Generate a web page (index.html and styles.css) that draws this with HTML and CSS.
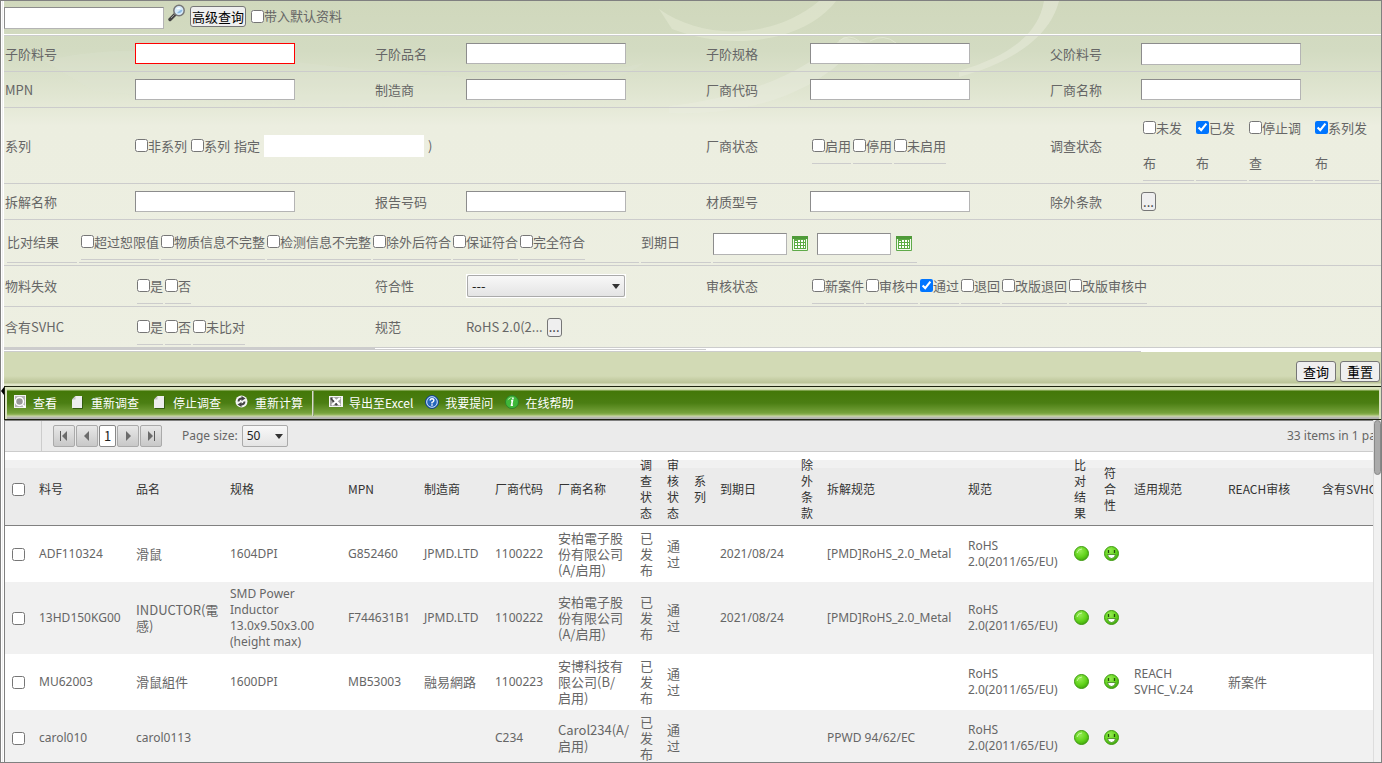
FILE: index.html
```html
<!DOCTYPE html>
<html lang="zh-CN">
<head>
<meta charset="utf-8">
<title>查询</title>
<link rel="stylesheet" href="styles.css">
</head>
<body>
<div class="page">
<div class="rail"><span class="rail-handle"></span></div>
<main class="content">
<form class="search">
  <svg class="art" viewBox="0 0 1377 130" preserveAspectRatio="none" aria-hidden="true">
    <path d="M40 60C200 20 420 110 640 62C560 120 300 110 90 90Z" fill="#e3e8d6" opacity=".2"/>
    <path d="M655 8C700 40 770 38 815 0L832 0C800 42 725 50 668 28Z" fill="#e3e7d2" opacity=".6"/>
    <path d="M665 105C750 95 800 70 840 36C870 45 900 48 925 46C890 66 860 66 838 60C800 95 740 115 665 112Z" fill="#eceee0" opacity=".4"/>
    <path d="M955 70C1010 54 1035 30 1040 0L1055 0C1045 40 1000 64 955 76Z" fill="#e6ead8" opacity=".6"/>
    <path d="M835 40Q845 32 855 40M866 40Q880 32 892 42" fill="none" stroke="#e6ead8" opacity=".7"/>
  </svg>
  <div class="quick">
    <input class="box tall" type="text" aria-label="快速查询">
    <button class="find" type="button" aria-label="搜索"><svg width="18" height="18" viewBox="0 0 18 18"><path d="M2 15.500L7.500 10" stroke="#444" stroke-width="3.400" stroke-linecap="round"/><path d="M3 14L6.500 10.500" stroke="#999" stroke-width="1"/><circle cx="11" cy="6.500" r="5.200" fill="#d5eafa" stroke="#777" stroke-width="1.500"/><path d="M8 5Q10 2.500 13 4Q11 6 8 5" fill="#fff"/><path d="M9 9Q13 10 14.500 6Q13 5 9 9" fill="#8dbbe4"/></svg></button>
    <button class="btn" type="button">高级查询</button>
    <label class="tick"><input type="checkbox">带入默认资料</label>
  </div>

  <div class="row">
    <label for="f1">子阶料号</label><div><input id="f1" class="box error" type="text"></div>
    <label for="f2">子阶品名</label><div><input id="f2" class="box" type="text"></div>
    <label for="f3">子阶规格</label><div><input id="f3" class="box" type="text"></div>
    <label for="f4">父阶料号</label><div><input id="f4" class="box tall" type="text"></div>
  </div>
  <div class="row">
    <label for="f5">MPN</label><div><input id="f5" class="box" type="text"></div>
    <label for="f6">制造商</label><div><input id="f6" class="box" type="text"></div>
    <label for="f7">厂商代码</label><div><input id="f7" class="box" type="text"></div>
    <label for="f8">厂商名称</label><div><input id="f8" class="box" type="text"></div>
  </div>
  <div class="row">
    <span>系列</span>
    <div class="series span3"><label class="tick"><input type="checkbox">非系列</label><label class="tick"><input type="checkbox">系列</label><label for="f9">指定</label><input id="f9" class="box tall plain" type="text"><span>)</span></div>
    <span>厂商状态</span>
    <div class="checks"><label class="opt"><input type="checkbox">启用</label><label class="opt"><input type="checkbox">停用</label><label class="opt"><input type="checkbox">未启用</label></div>
    <span>调查状态</span>
    <div class="checks survey"><label class="opt"><input type="checkbox">未发布</label><label class="opt"><input type="checkbox" checked>已发布</label><label class="opt"><input type="checkbox">停止调查</label><label class="opt"><input type="checkbox" checked>系列发布</label></div>
  </div>
  <div class="row">
    <label for="f10">拆解名称</label><div><input id="f10" class="box" type="text"></div>
    <label for="f11">报告号码</label><div><input id="f11" class="box" type="text"></div>
    <label for="f12">材质型号</label><div><input id="f12" class="box" type="text"></div>
    <span>除外条款</span><div><button class="dots" type="button" aria-label="选择除外条款">...</button></div>
  </div>
  <div class="row compare">
    <span class="cell">比对结果</span>
    <div class="cell checks"><label class="opt"><input type="checkbox">超过恕限值</label><label class="opt"><input type="checkbox">物质信息不完整</label><label class="opt"><input type="checkbox">检测信息不完整</label><label class="opt"><input type="checkbox">除外后符合</label><label class="opt"><input type="checkbox">保证符合</label><label class="opt"><input type="checkbox">完全符合</label></div>
    <span class="cell">到期日</span>
    <div class="cell dates">
      <input class="box tall date" type="text" aria-label="到期日起">
      <button class="cal" type="button" aria-label="选择开始日期"><svg width="16" height="16" viewBox="0 0 16 16"><path d="M.5.500H15.500V14.500H.5Z" fill="#f2faee" stroke="#5faa4a"/><path d="M0 0H16V3H0Z" fill="#4f9a39"/><path d="M2 3H14V13H2Z" fill="#5bab43"/><path d="M3 5h2v1H3zM6 4h2v2H6zM9 4h2v2H9zM12 4h1v2h-1zM3 7h2v2H3zM6 7h2v2H6zM9 7h2v2H9zM12 7h1v2h-1zM3 10h2v2H3zM6 10h2v2H6zM9 10h2v2H9zM12 10h1v2h-1z" fill="#fff"/></svg></button>
      <input class="box tall date" type="text" aria-label="到期日止">
      <button class="cal" type="button" aria-label="选择结束日期"><svg width="16" height="16" viewBox="0 0 16 16"><path d="M.5.500H15.500V14.500H.5Z" fill="#f2faee" stroke="#5faa4a"/><path d="M0 0H16V3H0Z" fill="#4f9a39"/><path d="M2 3H14V13H2Z" fill="#5bab43"/><path d="M3 5h2v1H3zM6 4h2v2H6zM9 4h2v2H9zM12 4h1v2h-1zM3 7h2v2H3zM6 7h2v2H6zM9 7h2v2H9zM12 7h1v2h-1zM3 10h2v2H3zM6 10h2v2H6zM9 10h2v2H9zM12 10h1v2h-1z" fill="#fff"/></svg></button>
    </div>
  </div>
  <div class="row">
    <span>物料失效</span><div class="checks"><label class="opt"><input type="checkbox">是</label><label class="opt"><input type="checkbox">否</label></div>
    <label for="f13">符合性</label><div><span class="pick wide"><select id="f13"><option>---</option></select></span></div>
    <span>审核状态</span>
    <div class="checks span3"><label class="opt"><input type="checkbox">新案件</label><label class="opt"><input type="checkbox">审核中</label><label class="opt"><input type="checkbox" checked>通过</label><label class="opt"><input type="checkbox">退回</label><label class="opt"><input type="checkbox">改版退回</label><label class="opt"><input type="checkbox">改版审核中</label></div>
  </div>
  <div class="row">
    <span>含有SVHC</span><div class="checks"><label class="opt"><input type="checkbox">是</label><label class="opt"><input type="checkbox">否</label><label class="opt"><input type="checkbox">未比对</label></div>
    <span>规范</span><div class="spec">RoHS 2.0(2...<button class="dots" type="button" aria-label="选择规范">...</button></div>
  </div>
  <div class="edge"><i class="edge-a"></i><i class="edge-b"></i><i class="edge-c"></i><i></i></div>
  <div class="actions"><button class="btn" type="button">查询</button><button class="btn" type="reset">重置</button></div>
</form>

<nav class="toolbar">
  <button type="button"><svg width="14" height="14" viewBox="0 0 14 14"><path d="M1 0H13V13H1Z" fill="#f2f2f2"/><path d="M2 1H12V12H2Z" fill="#b5b5b5"/><circle cx="6.500" cy="6.500" r="4" fill="#999" stroke="#fff" stroke-width="1.500"/><path d="M10 10L12 12.500" stroke="#fff" stroke-width="2"/></svg>查看</button>
  <button type="button"><svg width="14" height="14" viewBox="0 0 14 14"><path d="M4.500 1H11V13H1V4.500Z" fill="#eee"/><path d="M4.500 1V4.500H1Z" fill="#c5c5c5"/><path d="M11.500 2V13.500H2" fill="none" stroke="#355d12"/></svg>重新调查</button>
  <button type="button"><svg width="14" height="14" viewBox="0 0 14 14"><path d="M4.500 1H11V13H1V4.500Z" fill="#eee"/><path d="M4.500 1V4.500H1Z" fill="#c5c5c5"/><path d="M11.500 2V13.500H2" fill="none" stroke="#355d12"/></svg>停止调查</button>
  <button type="button"><svg width="14" height="14" viewBox="0 0 14 14"><circle cx="6.500" cy="6.500" r="6" fill="#f4f4f4"/><path d="M3.500 6.500Q3.500 3.500 7 3.500M9.500 6.500Q9.500 9.500 6 9.500" fill="none" stroke="#444" stroke-width="1.800"/><path d="M6.500 1L10.500 3.500L6.500 6ZM6.500 12L2.500 9.500L6.500 7Z" fill="#444"/></svg>重新计算</button>
  <span class="sep"></span>
  <button type="button"><svg width="14" height="14" viewBox="0 0 14 14"><path d="M0 1H14V12H0Z" fill="#f4f4f4"/><path d="M1 2H12V11H1Z" fill="#a5a5a5"/><path d="M2 3L8 10" stroke="#444" stroke-width="2.500"/><path d="M4 3L11 10M11 3L3 10" stroke="#fff" stroke-width="2.200"/></svg>导出至Excel</button>
  <button type="button"><svg width="14" height="14" viewBox="0 0 15 15"><circle cx="7.500" cy="7.500" r="7" fill="#2466bd" stroke="#174486"/><circle cx="7.500" cy="7.500" r="5.700" fill="none" stroke="#e4efff"/><path d="M5.500 6Q5.500 4 7.500 4T9.500 5.800Q9.500 7 7.500 8V9M7.500 10V11.500" fill="none" stroke="#fff" stroke-width="1.500"/></svg>我要提问</button>
  <button type="button"><svg width="14" height="14" viewBox="0 0 15 15"><circle cx="7.500" cy="7.500" r="7" fill="#3fb83a" stroke="#2d802b"/><path d="M2.500 6Q4 2 9 2.200Q6 3 2.500 6" fill="#b9edae"/><path d="M8.500 2.800V4.500M6.500 6H8L7 11H8.500" fill="none" stroke="#fff" stroke-width="1.700"/></svg>在线帮助</button>
</nav>

<section class="grid">
<div class="view">
  <div class="pager">
    <span class="corner"></span>
    <div class="pages">
      <button type="button" aria-label="首页"><svg width="12" height="12" viewBox="0 0 12 12"><path d="M2.500 1V11" stroke="#5a5a5a"/><path d="M9 1V11L4 6Z" fill="#6b6b6b"/></svg></button>
      <button type="button" aria-label="上一页"><svg width="12" height="12" viewBox="0 0 12 12"><path d="M8 1V11L3 6Z" fill="#6b6b6b"/></svg></button>
      <button class="current" type="button">1</button>
      <button type="button" aria-label="下一页"><svg width="12" height="12" viewBox="0 0 12 12"><path d="M4 1V11L9 6Z" fill="#6b6b6b"/></svg></button>
      <button type="button" aria-label="末页"><svg width="12" height="12" viewBox="0 0 12 12"><path d="M9.500 1V11" stroke="#5a5a5a"/><path d="M3 1V11L8 6Z" fill="#6b6b6b"/></svg></button>
    </div>
    <label class="size en" for="size">Page size:</label>
    <span class="pick small en"><select id="size"><option>50</option></select></span>
    <span class="total en">33 items in 1 pages</span>
  </div>
  <table>
    <colgroup><col class="w27"><col class="w97"><col class="w94"><col class="w118"><col class="w76"><col class="w71"><col class="w63"><col class="w82"><col class="w27"><col class="w27"><col class="w26"><col class="w81"><col class="w26"><col class="w141"><col class="w106"><col class="w30"><col class="w30"><col class="w94"><col class="w94"><col class="w94"></colgroup>
    <thead><tr><th><input type="checkbox" aria-label="全选"></th><th>料号</th><th>品名</th><th>规格</th><th>MPN</th><th>制造商</th><th>厂商代码</th><th>厂商名称</th><th>调查状态</th><th>审核状态</th><th>系列</th><th>到期日</th><th>除外条款</th><th>拆解规范</th><th>规范</th><th class="one">比对结果</th><th class="one">符合性</th><th>适用规范</th><th>REACH审核</th><th>含有SVHC</th></tr></thead>
    <tbody>
    <tr><td><input type="checkbox" aria-label="选择 ADF110324"></td><td class="en">ADF110324</td><td>滑鼠</td><td class="en">1604DPI</td><td class="en">G852460</td><td class="en">JPMD.LTD</td><td class="en">1100222</td><td>安柏電子股份有限公司(A/启用)</td><td>已发布</td><td>通过</td><td></td><td class="en">2021/08/24</td><td></td><td class="en">[PMD]RoHS_2.0_Metal</td><td class="en">RoHS<br>2.0(2011/65/EU)</td><td class="icon"><svg width="16" height="16"><use href="#ok"/></svg></td><td class="icon"><svg width="16" height="16"><use href="#smile"/></svg></td><td></td><td></td><td></td></tr>
    <tr><td><input type="checkbox" aria-label="选择 13HD150KG00"></td><td class="en">13HD150KG00</td><td>INDUCTOR(電<br>感)</td><td class="en">SMD Power<br>Inductor<br>13.0x9.50x3.00<br>(height max)</td><td class="en">F744631B1</td><td class="en">JPMD.LTD</td><td class="en">1100222</td><td>安柏電子股份有限公司(A/启用)</td><td>已发布</td><td>通过</td><td></td><td class="en">2021/08/24</td><td></td><td class="en">[PMD]RoHS_2.0_Metal</td><td class="en">RoHS<br>2.0(2011/65/EU)</td><td class="icon"><svg width="16" height="16"><use href="#ok"/></svg></td><td class="icon"><svg width="16" height="16"><use href="#smile"/></svg></td><td></td><td></td><td></td></tr>
    <tr><td><input type="checkbox" aria-label="选择 MU62003"></td><td class="en">MU62003</td><td>滑鼠組件</td><td class="en">1600DPI</td><td class="en">MB53003</td><td>融易網路</td><td class="en">1100223</td><td>安博科技有限公司(B/<br>启用)</td><td>已发布</td><td>通过</td><td></td><td></td><td></td><td></td><td class="en">RoHS<br>2.0(2011/65/EU)</td><td class="icon"><svg width="16" height="16"><use href="#ok"/></svg></td><td class="icon"><svg width="16" height="16"><use href="#smile"/></svg></td><td class="en">REACH<br>SVHC_V.24</td><td>新案件</td><td></td></tr>
    <tr><td><input type="checkbox" aria-label="选择 carol010"></td><td class="en">carol010</td><td class="en">carol0113</td><td></td><td></td><td></td><td class="en">C234</td><td>Carol234(A/<br>启用)</td><td>已发布</td><td>通过</td><td></td><td></td><td></td><td class="en">PPWD 94/62/EC</td><td class="en">RoHS<br>2.0(2011/65/EU)</td><td class="icon"><svg width="16" height="16"><use href="#ok"/></svg></td><td class="icon"><svg width="16" height="16"><use href="#smile"/></svg></td><td></td><td></td><td></td></tr>
    </tbody>
  </table>
</div>
<div class="bar"><span></span></div>
</section>
</main>
</div>
<svg class="defs" aria-hidden="true"><defs>
  <radialGradient id="g" cx=".4" cy=".3" r=".75"><stop offset="0" stop-color="#95ec52"/><stop offset=".6" stop-color="#62d31c"/><stop offset="1" stop-color="#3fa30c"/></radialGradient>
  <symbol id="ok" viewBox="0 0 16 16"><circle cx="7.500" cy="7.500" r="7" fill="url(#g)" stroke="#3f9b12"/><path d="M3 7Q4 3 8 3" fill="none" stroke="#c5f7a0" stroke-width="1"/></symbol>
  <symbol id="smile" viewBox="0 0 16 16"><circle cx="7.500" cy="7.500" r="7" fill="url(#g)" stroke="#3f9b12"/><path d="M4.500 4V7M10.500 4V7" stroke="#234d0c" stroke-width="1.300"/><path d="M3.500 8.500H11.500Q11 12.500 7.500 12.500T3.500 8.500Z" fill="#fff" stroke="#3c8419" stroke-width=".8"/></symbol>
</defs></svg>
</body>
</html>
```
FILE: styles.css
```css
* { box-sizing: border-box; }
body {
  margin: 0;
  font: 13px/16px "Noto Sans CJK SC", sans-serif;
  color: #666;
  background: #fff;
}
input, button, select { font: inherit; margin: 0; }
input[type="checkbox"] { width: 13px; height: 13px; flex: none; }
svg { flex: none; }
.defs { position: absolute; width: 0; height: 0; }
.en { font-family: "Noto Sans", "Noto Sans CJK SC", sans-serif; font-size: 12px; }

.page {
  display: flex;
  height: 100vh;
  border: 1px solid #808080;
  overflow: hidden;
}
.rail {
  flex: none;
  width: 3px;
  background: linear-gradient(90deg, #fff 1px, #dcdcdc 1px, #fff 2px);
  padding-top: 386px;
}
.rail-handle {
  display: block;
  border: solid transparent;
  border-width: 4px 3px 4px 0;
  border-right-color: #000;
}
.content { flex: 1; min-width: 0; display: flex; flex-direction: column; }

/* search form */
.search {
  position: relative;
  flex: none;
  background: linear-gradient(#d0d8bc, #d3dbc2 50px, #e1e6d2 95px, #eceee0 125px, #edefe2);
}
.art { position: absolute; inset: 0 0 auto; width: 100%; height: 130px; }
.quick, .row, .edge, .actions { position: relative; }
.quick {
  display: flex;
  align-items: flex-start;
  height: 35px;
  border-bottom: 1px solid #ccc;
  box-shadow: inset 0 -1px #fff;
}
.quick .box { margin-top: 6px; }
.quick .btn { margin-top: 5px; padding: 0 1px; }
.quick .tick { margin: 7px 0 0 5px; }
.find { margin: 3px 4px 0; border: 0; padding: 0; width: 18px; height: 18px; background: none; }
.find svg, .cal svg { display: block; }
.box {
  display: block;
  width: 160px;
  max-width: 100%;
  height: 21px;
  padding: 1px 3px;
  border: 1px solid;
  border-color: #8c8c8c #b4b4b4 #b4b4b4 #8c8c8c;
  background: #fff;
}
.tall { height: 22px; }
.error { border-color: #f00; }
.plain { border-color: #fff; }
.btn {
  height: 21px;
  min-width: 40px;
  padding: 0 6px;
  border: 1px solid #767676;
  border-radius: 3px;
  background: #efefef;
  color: #000;
  line-height: 17px;
  white-space: nowrap;
}
.row {
  display: grid;
  grid-template-columns:
    minmax(0, 131fr) minmax(0, 240fr) minmax(0, 91fr) minmax(0, 240fr)
    minmax(0, 104fr) minmax(0, 240fr) minmax(0, 91fr) minmax(0, 240fr);
  align-items: center;
  min-height: 36px;
  border-bottom: 1px solid #ccc;
}
.row > :first-child { padding-left: 1px; }
.tick { display: inline-flex; align-items: center; white-space: nowrap; }
.series { display: flex; align-items: center; gap: 4px; white-space: nowrap; }
.checks { display: flex; gap: 2px; padding: 2px; }
.opt {
  line-height: 35px;
  border-bottom: 1px solid #ccc;
  white-space: nowrap;
}
.opt input { vertical-align: -1px; }
.survey { display: grid; grid-template-columns: 51fr 51fr 64fr 64fr; }
.survey .opt { white-space: normal; }
.span3 { grid-column: span 3; }
.row.compare {
  display: flex;
  align-items: center;
  gap: 2px;
  min-height: 46px;
  padding: 0 3px;
}
.compare > .cell {
  min-height: 41px;
  padding: 0;
  border-bottom: 1px solid #ccc;
  line-height: 40px;
  white-space: nowrap;
  width: 70px;
}
.compare > .checks { width: 560px; padding: 2px; }
.compare > .dates { width: 204px; display: flex; align-items: center; gap: 5px; padding-top: 4px; }
.date { width: 74px; }
.cal + .date { margin-left: 4px; }
.cal { border: 0; padding: 0; width: 16px; height: 16px; background: none; }
.dots {
  width: 15px;
  height: 19px;
  padding: 0;
  border: 1px solid #767676;
  border-radius: 3px;
  background: #efefef;
  color: #333;
  line-height: 16px;
}
.row > div > .dots { display: block; }
.spec { display: flex; align-items: center; gap: 4px; white-space: nowrap; }
.pick { position: relative; display: inline-block; vertical-align: top; }
.pick select {
  appearance: none;
  display: block;
  width: 100%;
  height: 22px;
  padding: 0 4px;
  border: 1px solid #aaa;
  border-radius: 2px;
  background: linear-gradient(#f8f8f8, #e4e4e4);
  color: #222;
  line-height: 18px;
}
.pick::after {
  content: "";
  position: absolute;
  right: 5px;
  top: 9px;
  border: solid transparent;
  border-width: 5px 4px 0;
  border-top-color: #333;
  pointer-events: none;
}
.wide { width: 160px; border: 1px solid #fff; }
.small { width: 46px; }
.edge {
  display: grid;
  grid-template-columns: 371fr 331fr 435fr 240fr;
  height: 4px;
  background: #fff;
}
.edge-a { background: linear-gradient(#ccc 2px, #fff 2px, #fff 3px, #ccc 3px); }
.edge-b { background: linear-gradient(#fff 1px, #ccc 1px, #ccc 2px, #fff 2px, #fff 3px, #ccc 3px); }
.edge-c { background: linear-gradient(#fff 3px, #ccc 3px); }
.actions {
  display: flex;
  justify-content: flex-end;
  align-items: flex-start;
  gap: 4px;
  height: 34px;
  padding: 9px 1px 0;
  background: linear-gradient(#d2dab5 24px, #bac396 31px, #dfe5c8 32px);
}

/* toolbar */
.toolbar {
  flex: none;
  display: flex;
  align-items: center;
  height: 34px;
  padding: 0 8px;
  border: solid #1c220f;
  border-width: 1px 0 1px 1px;
  background: linear-gradient(#dbe5bf 2px, #b8cb8e 3px, #437808 4px, #4b7e13 16px, #76a23b 26px, #9aba62 28px, #c9d5a6 29px, #b1b1b1 31px);
  box-shadow: inset 2px 0 #d9e2c0, inset -2px 0 #d9e2c0;
}
.toolbar button {
  display: flex;
  align-items: center;
  gap: 6px;
  margin-right: 14px;
  padding: 0;
  border: 0;
  background: none;
  color: #fff;
  font-size: 12px;
  white-space: nowrap;
}
.toolbar button svg { margin-bottom: 2px; }
.sep { width: 2px; height: 25px; margin: 0 15px 0 -5px; background: linear-gradient(90deg, #d9dfcb 1px, #8f9f77 1px); }
.sep ~ button { margin-right: 12px; }

/* result grid */
.grid { flex: 1; min-height: 0; display: flex; border-left: 1px solid #808080; }
.view { flex: 1; min-width: 0; overflow: hidden; }
.bar { flex: none; width: 8px; background: #f1f1f1; border-left: 1px solid #ddd; }
.bar span { display: block; height: 55px; border: 1px solid #888; border-radius: 4px; background: #aaa; }
.pager {
  display: flex;
  align-items: center;
  width: 1404px;
  height: 32px;
  border-top: 1px solid #808080;
  border-bottom: 1px solid #ccc;
  background: #ebebeb;
}
.corner { width: 37px; align-self: stretch; border-right: 1px solid #ccc; }
.pages { display: flex; gap: 1px; margin-left: 11px; }
.pages button {
  display: grid;
  place-items: center;
  width: 22px;
  height: 22px;
  padding: 0;
  border: 1px solid #aaa;
  border-radius: 2px;
  background: linear-gradient(#e8e8e8, #c8c8c8);
}
.pages .current { width: 17px; background: #fff; color: #222; border-color: #888; }
.size { margin: 0 4px 0 20px; }
.total { margin-left: auto; width: 122px; white-space: nowrap; }
table { width: 1404px; table-layout: fixed; border-collapse: separate; border-spacing: 0; }
.w26 { width: 26px; } .w27 { width: 27px; } .w30 { width: 30px; } .w63 { width: 63px; }
.w71 { width: 71px; } .w76 { width: 76px; } .w81 { width: 81px; } .w82 { width: 82px; }
.w94 { width: 94px; } .w97 { width: 97px; } .w106 { width: 106px; } .w118 { width: 118px; }
.w141 { width: 141px; }
th, td { padding: 4px 7px; text-align: left; vertical-align: middle; }
td.en { white-space: nowrap; }
th {
  padding-top: 5px;
  font-size: 12px;
  font-weight: 400;
  color: #333;
  border-bottom: 1px solid #808080;
}
th:nth-child(7) { white-space: nowrap; }
th.one { padding-right: 10px; }
thead { background: linear-gradient(#fff 8px, #f1f1f1 8px, #f1f1f1 16px, #ebebeb 16px); }
th input, td input { display: block; }
tbody tr:nth-child(even) { background: #f1f1f1; }
.icon svg { display: block; }
```
